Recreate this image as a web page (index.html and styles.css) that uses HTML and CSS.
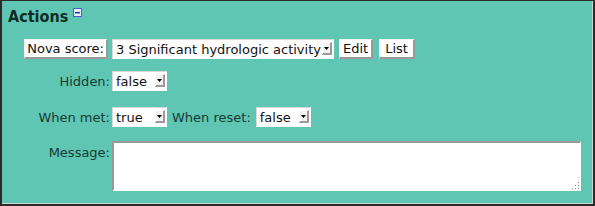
FILE: index.html
```html
<!DOCTYPE html>
<html>
<head>
<meta charset="utf-8">
<link rel="stylesheet" href="styles.css">
</head>
<body>
<div class="panel">
  <h2 class="title">Actions <span class="toggle"><svg width="9" height="9" viewBox="0 0 9 9"><rect x="0.5" y="0.5" width="8" height="8" fill="#e8ecff" stroke="#5060c0"/><rect x="2" y="4" width="5" height="1.4" fill="#2030a0"/></svg></span></h2>
  <div class="form">
    <div class="label"><button class="btn">Nova score:</button></div>
    <div class="field">
      <span class="sel w-score"><select><option>3 Significant hydrologic activity</option></select><span class="arrow"><svg width="7" height="4" viewBox="0 0 7 4"><path d="M0 0H7L3.5 4Z" fill="#000"/></svg></span></span>
      <button class="btn btn-edit">Edit</button>
      <button class="btn btn-list">List</button>
    </div>

    <div class="label r2">Hidden:</div>
    <div class="field r2">
      <span class="sel w-small"><select><option>false</option></select><span class="arrow"><svg width="7" height="4" viewBox="0 0 7 4"><path d="M0 0H7L3.5 4Z" fill="#000"/></svg></span></span>
    </div>

    <div class="label r3">When met:</div>
    <div class="field r3">
      <span class="sel w-small"><select><option>true</option></select><span class="arrow"><svg width="7" height="4" viewBox="0 0 7 4"><path d="M0 0H7L3.5 4Z" fill="#000"/></svg></span></span>
      <span class="inline-label">When reset:</span>
      <span class="sel w-small"><select><option>false</option></select><span class="arrow"><svg width="7" height="4" viewBox="0 0 7 4"><path d="M0 0H7L3.5 4Z" fill="#000"/></svg></span></span>
    </div>

    <div class="label r4 top">Message:</div>
    <div class="field r4">
      <span class="ta-wrap"><textarea></textarea><svg class="grip" width="9" height="9" viewBox="0 0 9 9"><g fill="#8a8a8a"><rect x="7" y="1" width="1" height="1"/><rect x="4" y="4" width="1" height="1"/><rect x="7" y="4" width="1" height="1"/><rect x="1" y="7" width="1" height="1"/><rect x="4" y="7" width="1" height="1"/><rect x="7" y="7" width="1" height="1"/></g></svg></span>
    </div>
  </div>
</div>
</body>
</html>
```
FILE: styles.css
```css
html, body {
  margin: 0;
  padding: 0;
  background: #ffffff;
}
body {
  font-family: "DejaVu Sans", Verdana, sans-serif;
  font-size: 13px;
  color: #163a33;
}
.panel {
  width: 595px;
  height: 206px;
  box-sizing: border-box;
  background: #5fc6b4;
  border-style: solid;
  border-width: 1px 2px 2px 2px;
  border-color: #2b2b2b;
  box-shadow: inset -1px -1px 0 #c8d8d4;
  padding: 5px 6px 0 6px;
}
.title {
  margin: 0;
  font-family: "DejaVu Sans Condensed", "DejaVu Sans", sans-serif;
  font-size: 16px;
  font-weight: bold;
  color: #0f2b25;
  line-height: 22px;
  display: flex;
  align-items: flex-start;
  gap: 5px;
}
.toggle {
  display: inline-flex;
  margin-top: 2px;
}
.form {
  display: grid;
  grid-template-columns: 102px 1fr;
  column-gap: 2px;
  margin-top: 11px;
}
.label {
  text-align: right;
  display: flex;
  justify-content: flex-end;
  align-items: center;
  height: 20px;
}
.label.top { align-items: flex-start; }
.field {
  display: flex;
  align-items: center;
  gap: 5px;
  min-height: 20px;
}
.r2 { margin-top: 12px; }
.r3 { margin-top: 16px; }
.r4 { margin-top: 14px; }
.label.r4 { padding-top: 4px; height: auto; }
.btn {
  font-family: "DejaVu Sans", Verdana, sans-serif;
  font-size: 13px;
  color: #111;
  background: #ffffff;
  border-style: solid;
  border-width: 1px 2px 2px 1px;
  border-color: #f4f4f4 #9a9a9a #9a9a9a #f4f4f4;
  height: 20px;
  padding: 0 2px;
  margin: 0;
  line-height: 16px;
}
.btn-edit { padding: 0 3px; }
.btn-list { padding: 0 5px; margin-left: 1px; }
.label .btn { margin-right: 2px; }
.sel {
  position: relative;
  display: inline-block;
  height: 20px;
}
.sel select {
  appearance: none;
  -webkit-appearance: none;
  font-family: "DejaVu Sans", Verdana, sans-serif;
  font-size: 13px;
  color: #111;
  background: #ffffff;
  border-style: solid;
  border-width: 1px;
  border-color: #d8d8d8 #ffffff #ffffff #d8d8d8;
  height: 20px;
  width: 100%;
  padding: 0 12px 0 3px;
  margin: 0;
  box-sizing: border-box;
}
.w-score { width: 222px; }
.w-small { width: 55px; }
.arrow {
  position: absolute;
  right: 2px;
  top: 3px;
  width: 10px;
  height: 13px;
  box-sizing: border-box;
  background: #f2f2f2;
  border-style: solid;
  border-width: 1px 2px 2px 1px;
  border-color: #ffffff #9a9a9a #9a9a9a #ffffff;
  display: flex;
  align-items: center;
  justify-content: center;
  pointer-events: none;
}
.arrow svg { display: block; width: 5px; height: 3px; }
.inline-label { margin-left: 0; }
.ta-wrap {
  position: relative;
  display: block;
  width: 469px;
  height: 50px;
}
.ta-wrap textarea {
  display: block;
  width: 100%;
  height: 100%;
  box-sizing: border-box;
  background: #ffffff;
  border-style: solid;
  border-width: 2px 1px 1px 2px;
  border-color: #9a9a9a #ffffff #ffffff #9a9a9a;
  margin: 0;
  resize: none;
  font-family: "DejaVu Sans", Verdana, sans-serif;
  font-size: 13px;
}
.grip {
  position: absolute;
  right: 1px;
  bottom: 1px;
  display: block;
}
```
